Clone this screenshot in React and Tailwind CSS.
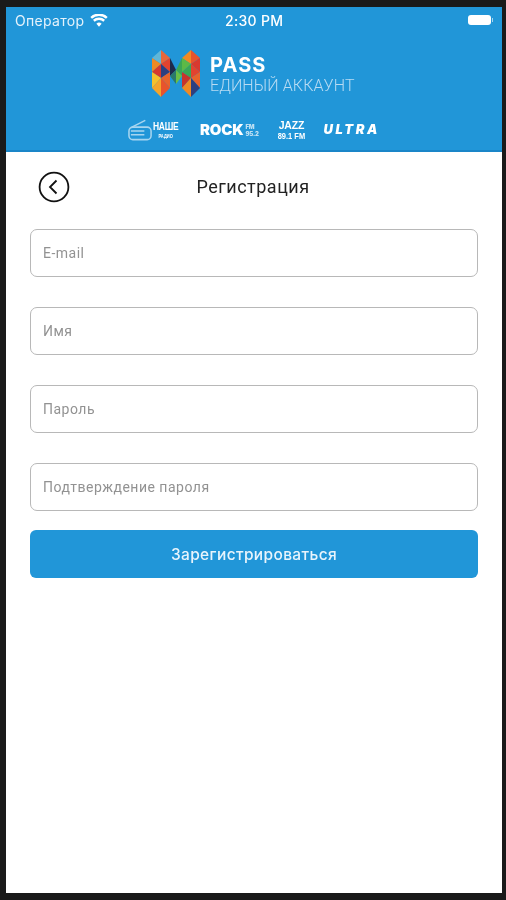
import React from 'react'

const logoTris = [
  // left pillar
  ['#5fb6d8', '152,58 161,50 161,64'],
  ['#e8673a', '161,50 170,58 161,64'],
  ['#f08a24', '152,58 161,64 152,72'],
  ['#e2432f', '161,64 170,58 170,72'],
  ['#2e3f7f', '161,64 170,72 161,78'],
  ['#d8392f', '152,72 161,64 161,78'],
  ['#f6c02c', '152,72 161,78 152,88'],
  ['#e8632b', '161,78 170,72 170,88'],
  ['#f4a52a', '152,88 161,78 161,97'],
  ['#e8532b', '161,78 170,88 161,97'],
  // middle
  ['#1e2a4a', '170,58 176,70 170,76'],
  ['#3aa655', '176,70 182,58 182,76'],
  ['#2a7a6a', '170,76 176,70 176,84'],
  ['#6abf45', '176,70 182,76 176,84'],
  // right pillar
  ['#f08a24', '182,58 191,50 191,64'],
  ['#e8532b', '191,50 200,58 191,64'],
  ['#5cb947', '182,58 191,64 182,72'],
  ['#d8392f', '191,64 200,58 200,72'],
  ['#3aa655', '182,72 191,64 191,78'],
  ['#e2432f', '191,64 200,72 191,78'],
  ['#c8342c', '182,72 191,78 182,88'],
  ['#e8632b', '191,78 200,72 200,88'],
  ['#f08a24', '182,88 191,78 191,97'],
  ['#2e3f7f', '191,78 200,88 191,97'],
]

function Field({ placeholder }) {
  return (
    <div className="h-12 rounded-[7px] border-[1.5px] border-[#b8b8b8] bg-white flex items-center pl-3 text-[14px] text-[#929292] tracking-[0.5px]">
      {placeholder}
    </div>
  )
}

export default function App() {
  return (
    <div className="w-[506px] h-[900px] bg-[#1a1a1a] pt-[7px] pl-[6px] pr-1 pb-[7px] font-['Roboto',sans-serif] overflow-hidden">
      <div className="h-full bg-white flex flex-col blur-[0.7px]">
        {/* Blue header */}
        <div className="h-[145px] bg-[#2196d8] border-b-2 border-[#1a86c8] text-white flex flex-col shrink-0">
          <div className="h-[26px] flex items-center pl-[9px] relative">
            <div className="flex items-center gap-[6px] text-[14px] text-[#e4f2fb] tracking-[0.3px] font-['Inter',sans-serif]">
              <span className="w-[69px] whitespace-nowrap">Оператор</span>
              <svg width="18" height="13" viewBox="0 0 24 18" fill="white">
                <path d="M12 17.5 8.4 13.4a5.2 5.2 0 0 1 7.2 0L12 17.5Z" />
                <path d="M5.9 10.6 3.7 8.1a12.4 12.4 0 0 1 16.6 0l-2.2 2.5a9.2 9.2 0 0 0-12.2 0Z" />
                <path d="M2.3 6.5 0 4a17.8 17.8 0 0 1 24 0l-2.3 2.5a14.6 14.6 0 0 0-19.4 0Z" />
              </svg>
            </div>
            <span className="absolute left-[219px] text-[14px] font-medium tracking-[0.3px] font-['Inter',sans-serif]">2:30 PM</span>
            <div className="absolute left-[462px] flex items-center gap-[1px]">
              <div className="w-[23px] h-[10px] rounded-[3px] bg-white" />
              <div className="w-[1px] h-[4px] bg-white/60" />
            </div>
          </div>

          <div className="flex items-start pl-[146px] mt-[17px] h-[47px]">
            <svg width="48" height="47" viewBox="152 50 48 47" className="shrink-0">
              {logoTris.map(([fill, points]) => (
                <polygon key={points} fill={fill} points={points} />
              ))}
            </svg>
            <div className="ml-[10px] flex flex-col">
              <span className="text-[20px] font-bold leading-[24px] mt-[3px] tracking-[1.1px] font-['Inter',sans-serif]">PASS</span>
              <span className="text-[16px] leading-[20px] mt-[-1px] text-[#b9dcf3] font-light whitespace-nowrap tracking-[0.1px]">ЕДИНЫЙ АККАУНТ</span>
            </div>
          </div>

          <div className="flex items-center mt-[20px] pl-[122px] h-[26px] text-white">
            <div className="flex items-center w-[50px]">
              <svg width="25" height="24" viewBox="0 0 26 24" fill="none" stroke="white" strokeWidth="1.600" className="opacity-60 shrink-0">
                <rect x="1" y="9" width="23" height="13" rx="4" />
                <path d="M4 9 18 2" />
                <path d="M3 13h14M3 17h14" />
              </svg>
              <div className="flex flex-col items-center font-bold font-['Liberation_Sans',sans-serif] scale-y-125">
                <span className="text-[8.500px] leading-[9px] tracking-[-0.3px]">НАШЕ</span>
                <span className="text-[4px] leading-[5px]">РАДИО</span>
              </div>
            </div>
            <div className="ml-[22px] flex items-center font-black text-[15px] tracking-[-0.2px] font-['Inter',sans-serif]">
              ROCK
              <span className="text-[6px] leading-[7px] w-[12px] ml-[2px] opacity-70">FM 95.2</span>
            </div>
            <div className="ml-[19px] flex flex-col items-center font-bold w-[30px] font-['Liberation_Sans',sans-serif] scale-y-110">
              <span className="text-[10.500px] leading-[11px] tracking-[-0.2px]">JAZZ</span>
              <span className="text-[7.500px] leading-[9px] whitespace-nowrap">89.1 FM</span>
            </div>
            <span className="ml-[17px] text-[13px] font-black italic tracking-[2.6px] font-['Inter',sans-serif]">ULTRA</span>
          </div>
        </div>

        {/* Form */}
        <div className="px-6 flex flex-col">
          <div className="h-[77px] flex items-center relative justify-center">
            <svg width="32" height="32" viewBox="0 0 32 32" fill="none" stroke="#111" className="absolute left-[8px] top-[19px]">
              <circle cx="16" cy="16" r="14.400" strokeWidth="1.800" />
              <path d="M18.500 9.500 12 16l6.500 6.500" strokeWidth="1.800" />
            </svg>
            <span className="text-[18px] text-[#222] tracking-[0.5px] mt-[-8px] ml-[-2px]">Регистрация</span>
          </div>
          <div className="flex flex-col gap-[30px]">
            <Field placeholder="E-mail" />
            <Field placeholder="Имя" />
            <Field placeholder="Пароль" />
            <Field placeholder="Подтверждение пароля" />
          </div>
          <button className="mt-[19px] h-12 pt-[1px] rounded-[6px] bg-[#2196d8] text-[#e8f4fc] text-[15.500px] font-medium tracking-[0.35px] font-['Inter',sans-serif]">
            Зарегистрироваться
          </button>
        </div>
      </div>
    </div>
  )
}
